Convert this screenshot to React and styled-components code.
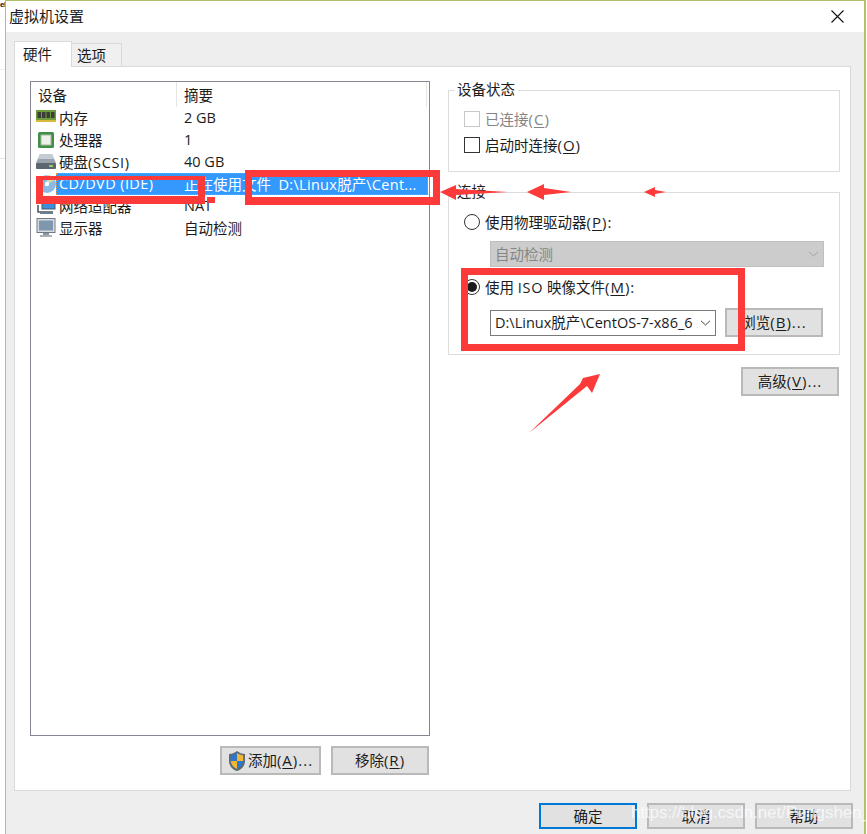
import React from "react";
import styled, { createGlobalStyle, css } from "styled-components";

const Global = createGlobalStyle`
  html, body { margin: 0; padding: 0; background: #fff; overflow: hidden; }
  * { box-sizing: border-box; }
  u { text-underline-offset: 2px; text-decoration-thickness: 1px; }
`;

const FONT = `"Open Sans", "Noto Sans CJK SC", sans-serif`;
const RED = "#fc3a3a";

const Page = styled.div`
  position: relative;
  display: flex;
  width: 867px;
  height: 834px;
  overflow: hidden;
  font-family: ${FONT};
  font-size: 14.5px;
  color: #1c1c1c;
  background: #fff;
`;
const Gutter = styled.div`
  width: 5px;
  flex: none;
  overflow: hidden;
  display: flex;
  flex-direction: column;
`;
const GutterText = styled.div`
  font: bold 8px/10px "Liberation Sans", sans-serif;
  letter-spacing: -0.5px;
  color: #111;
  width: 5px;
  height: 70px;
  white-space: nowrap;
  border-bottom: 1px solid #e8eef3;
`;
const GutterLine = styled.div`
  width: 5px;
  height: ${(p) => p.$h}px;
  border-bottom: 1px solid #e4e4e4;
`;
const Window = styled.div`
  width: 861px;
  flex: none;
  display: flex;
  flex-direction: column;
  border-left: 1px solid #b4c069;
  border-right: 2px solid #b4c069;
  border-top: 1px solid #b4c069;
  background: #eeeeee;
`;
const TitleBar = styled.div`
  height: 31px;
  flex: none;
  background: #fff;
  display: flex;
  align-items: center;
  justify-content: space-between;
  padding: 0 20px 2px 3px;
  font-size: 15px;
`;
const CloseIcon = styled.svg`
  width: 13px;
  height: 13px;
  display: block;
  margin-top: 2px;
`;
const Body = styled.div`
  flex: 1;
  padding: 9px 0 0 8px;
  display: flex;
  flex-direction: column;
`;
const TabStrip = styled.div`
  height: 25px;
  display: flex;
  align-items: flex-end;
  flex: none;
`;
const Tab = styled.div`
  border: 1px solid #d9d9d9;
  display: flex;
  align-items: center;
  font-size: 14.5px;
  ${(p) =>
    p.$active
      ? css`
          width: 58px;
          height: 26px;
          background: #fff;
          border-bottom: none;
          margin-bottom: -1px;
          position: relative;
          z-index: 1;
          padding: 0 0 3px 8px;
        `
      : css`
          width: 50px;
          height: 23px;
          background: #f0f0f0;
          border-left: none;
          border-bottom: none;
          padding: 0 0 1px 5px;
        `}
`;
const Panel = styled.div`
  width: 837px;
  height: 725px;
  flex: none;
  background: #fff;
  border: 1px solid #d9d9d9;
  padding: 14px 0 0 15px;
  display: flex;
  gap: 18px;
`;
const LeftColumn = styled.div`
  width: 400px;
  flex: none;
  display: flex;
  flex-direction: column;
`;
const DeviceList = styled.div`
  height: 655px;
  flex: none;
  border: 1px solid #828790;
  background: #fff;
`;
const ListHeader = styled.div`
  height: 25px;
  display: flex;
  align-items: center;
`;
const HeaderCell = styled.div`
  width: ${(p) => p.$w}px;
  height: 25px;
  flex: none;
  display: flex;
  align-items: center;
  padding: 0 0 1px ${(p) => p.$pl}px;
  border-right: 1px solid #e5e5e5;
`;
const Row = styled.div`
  height: 22px;
  display: flex;
  align-items: center;
  padding-left: 5px;
`;
const RowIcon = styled.svg`
  width: 20px;
  height: 20px;
  flex: none;
  display: block;
`;
const RowCells = styled.div`
  flex: 1;
  height: 22px;
  margin-right: 1px;
  padding: 0 0 1px 3px;
  display: flex;
  align-items: center;
  white-space: nowrap;
  ${(p) =>
    p.$selected &&
    css`
      background: #3399ff;
      color: #fff;
      outline: 1px dotted #e8913a;
      outline-offset: -1px;
    `}
`;
const NameCell = styled.div`
  width: 125px;
  flex: none;
`;
const SummaryCell = styled.div`
  flex: 1;
  overflow: hidden;
`;
const Latin = styled.span`
  letter-spacing: ${(p) => p.$ls || 0.4}px;
`;
const Accel = styled.span`
  font-size: 15px;
  letter-spacing: 1px;
`;
const ListActions = styled.div`
  display: flex;
  justify-content: flex-end;
  gap: 10px;
  margin-top: 10px;
  padding-right: 1px;
`;
const Button = styled.div`
  width: ${(p) => p.$w || 98}px;
  height: ${(p) => p.$h || 29}px;
  flex: none;
  display: flex;
  align-items: center;
  justify-content: center;
  gap: 2px;
  padding-bottom: 2px;
  background: #e1e1e1;
  border: ${(p) => (p.$primary ? "2px solid #0078d7" : "2px solid #b9b9b9")};
  white-space: nowrap;
`;
const ShieldIcon = styled.svg`
  width: 18px;
  height: 22px;
  flex: none;
  display: block;
  margin-top: 2px;
`;
const RightColumn = styled.div`
  width: 392px;
  flex: none;
  padding-top: 9px;
  display: flex;
  flex-direction: column;
`;
const Group = styled.div`
  position: relative;
  height: ${(p) => p.$h}px;
  flex: none;
  border: 1px solid #dcdcdc;
  margin-bottom: ${(p) => p.$mb}px;
  padding: ${(p) => p.$pt}px 0 0 15px;
`;
const Legend = styled.div`
  position: absolute;
  left: 5px;
  top: -11px;
  padding: 0 3px;
  height: 20px;
  line-height: 20px;
  background: #fff;
`;
const OptionRow = styled.div`
  height: 26px;
  display: flex;
  align-items: center;
  gap: 5px;
  margin-top: ${(p) => p.$mt || 0}px;
  color: ${(p) => (p.$disabled ? "#858585" : "inherit")};
`;
const OptionText = styled.span`
  margin-top: -1px;
`;
const Check = styled.div`
  width: 16px;
  height: 16px;
  flex: none;
  background: #fff;
  border: 1px solid ${(p) => (p.$disabled ? "#c8c8c8" : "#333")};
`;
const Radio = styled.div`
  width: 16px;
  height: 16px;
  flex: none;
  border-radius: 50%;
  background: #fff;
  border: 1px solid #333;
  display: flex;
  align-items: center;
  justify-content: center;
  &::after {
    content: "";
    width: 10px;
    height: 10px;
    border-radius: 50%;
    background: ${(p) => (p.$on ? "#1c1c1c" : "transparent")};
  }
`;
const Combo = styled.div`
  width: ${(p) => p.$w}px;
  height: 26px;
  flex: none;
  display: flex;
  align-items: center;
  justify-content: space-between;
  padding: 0 4px 2px 4px;
  white-space: nowrap;
  ${(p) =>
    p.$disabled
      ? css`
          margin: 6px 0 0 26px;
          background: #cccccc;
          border: 1px solid #bfbfbf;
          color: #868686;
        `
      : css`
          background: #fff;
          border: 1px solid #7a7a7a;
        `}
`;
const Chevron = styled.svg`
  width: 11px;
  height: 6px;
  flex: none;
  display: block;
  margin-top: 2px;
`;
const FileRow = styled.div`
  display: flex;
  align-items: center;
  gap: 9px;
  margin: 8px 0 0 26px;
`;
const RightActions = styled.div`
  display: flex;
  justify-content: flex-end;
  padding-right: 1px;
`;
const Footer = styled.div`
  display: flex;
  justify-content: flex-end;
  gap: 10px;
  padding: 12px 11px 0 0;
`;
const RedBox = styled.div`
  position: absolute;
  left: ${(p) => p.$x}px;
  top: ${(p) => p.$y}px;
  width: ${(p) => p.$w}px;
  height: ${(p) => p.$h}px;
  border-style: solid;
  border-color: ${RED};
  border-width: ${(p) => p.$b};
  pointer-events: none;
`;
const ArrowLayer = styled.svg`
  position: absolute;
  left: 0;
  top: 0;
  width: 867px;
  height: 834px;
  pointer-events: none;
`;
const Watermark = styled.div`
  position: absolute;
  left: 631px;
  top: 803px;
  font: 17px/20px "Liberation Sans", sans-serif;
  letter-spacing: -0.1px;
  color: rgba(255, 255, 255, 0.72);
  white-space: nowrap;
  pointer-events: none;
`;

const chev = (color) => (
  <Chevron viewBox="0 0 11 6">
    <path d="M1 .8 5.5 5 10 .8" fill="none" stroke={color} strokeWidth="1" />
  </Chevron>
);

const icons = {
  ram: (
    <>
      <rect x="0" y="2" width="20" height="11" fill="#6e9d3e" />
      <rect x="0" y="12" width="20" height="2" fill="#d9b93f" />
      <rect x="1.500" y="4" width="3.500" height="6" fill="#3b3f38" />
      <rect x="6" y="4" width="3.500" height="6" fill="#3b3f38" />
      <rect x="10.500" y="4" width="3.500" height="6" fill="#3b3f38" />
      <rect x="15" y="4" width="3.500" height="6" fill="#3b3f38" />
    </>
  ),
  cpu: (
    <>
      <rect x="2" y="2" width="16" height="16" rx="1.500" fill="#3f8f48" />
      <rect x="5" y="5" width="10" height="10" fill="#eef0ea" stroke="#a9b7a5" />
    </>
  ),
  disk: (
    <>
      <path d="M4 2h12l4 9H0z" fill="#9aa3ad" />
      <path d="M4 2h12l2 5H2z" fill="#c4cbd2" />
      <rect x="0" y="11" width="20" height="6" rx="1" fill="#5d6670" />
      <rect x="13" y="13" width="4" height="2" fill="#8fd06a" />
    </>
  ),
  cd: (
    <>
      <circle cx="11" cy="10" r="9" fill="#8cb9e6" />
      <path d="M11 1a9 9 0 0 1 8 5l-8 4z" fill="#cfe0b0" />
      <circle cx="11" cy="10" r="2.200" fill="#fff" />
    </>
  ),
  net: (
    <>
      <path d="M2 9v7h15" fill="none" stroke="#4a5a6a" strokeWidth="1.600" />
      <rect x="6" y="2" width="13" height="11" fill="#3c8fdc" stroke="#47596b" />
      <rect x="4" y="15" width="13" height="3" fill="#6c7d8e" />
    </>
  ),
  monitor: (
    <>
      <rect x="1" y="0.500" width="18" height="14" fill="#d8dde2" stroke="#6f7a85" />
      <rect x="3" y="2.500" width="14" height="10" fill="#7f97ad" />
      <rect x="7" y="15" width="6" height="2" fill="#8a949e" />
      <rect x="4" y="17" width="12" height="2" fill="#a8b0b8" />
    </>
  ),
};

const rows = [
  { icon: "ram", name: "内存", summary: "2 GB" },
  { icon: "cpu", name: "处理器", summary: "1" },
  { icon: "disk", name: <>硬盘<Latin $ls={0.7}>(SCSI)</Latin></>, summary: "40 GB" },
  {
    icon: "cd",
    name: <Latin>CD/DVD (IDE)</Latin>,
    summary: <>正在使用文件&nbsp;&nbsp;<Latin $ls={0.3}>D:\Linux</Latin>脱产<Latin $ls={0.3}>\Cent...</Latin></>,
    selected: true,
  },
  { icon: "net", name: "网络适配器", summary: "NAT" },
  { icon: "monitor", name: "显示器", summary: "自动检测" },
];

export default function App() {
  return (
    <Page>
      <Global />
      <Gutter>
        <GutterText>el</GutterText>
        <GutterLine $h={89} />
      </Gutter>
      <Window>
        <TitleBar>
          <span>虚拟机设置</span>
          <CloseIcon viewBox="0 0 13 13">
            <path d="M.5.5l12 12M12.500.5l-12 12" stroke="#111" strokeWidth="1.100" />
          </CloseIcon>
        </TitleBar>
        <Body>
          <TabStrip>
            <Tab $active>硬件</Tab>
            <Tab>选项</Tab>
          </TabStrip>
          <Panel>
            <LeftColumn>
              <DeviceList>
                <ListHeader>
                  <HeaderCell $w={146} $pl={7}>设备</HeaderCell>
                  <HeaderCell $w={250} $pl={7}>摘要</HeaderCell>
                </ListHeader>
                {rows.map((r) => (
                  <Row key={r.icon}>
                    <RowIcon viewBox="0 0 20 20">{icons[r.icon]}</RowIcon>
                    <RowCells $selected={r.selected}>
                      <NameCell>{r.name}</NameCell>
                      <SummaryCell>{r.summary}</SummaryCell>
                    </RowCells>
                  </Row>
                ))}
              </DeviceList>
              <ListActions>
                <Button $w={101}>
                  <ShieldIcon viewBox="0 0 18 22">
                    <path d="M9 1c2.500 2 5 2.700 8 3v7c0 5-3.500 8.500-8 10-4.500-1.500-8-5-8-10V4c3-.3 5.500-1 8-3z" fill="#5a6a7a" />
                    <path d="M9 3C7 4.400 5 5.100 2.800 5.400V11H9z" fill="#2f78c8" />
                    <path d="M9 3c2 1.400 4 2.100 6.200 2.400V11H9z" fill="#f2b632" />
                    <path d="M2.800 11H9v8c-3.400-1.300-6-4.300-6.200-8z" fill="#f2b632" />
                    <path d="M15.200 11H9v8c3.400-1.300 6-4.300 6.200-8z" fill="#2f78c8" />
                  </ShieldIcon>
                  <span>添加<Accel>(<u>A</u>)...</Accel></span>
                </Button>
                <Button>
                  <span>移除<Accel>(<u>R</u>)</Accel></span>
                </Button>
              </ListActions>
            </LeftColumn>
            <RightColumn>
              <Group $h={82} $mb={20} $pt={15}>
                <Legend>设备状态</Legend>
                <OptionRow $disabled>
                  <Check $disabled />
                  <OptionText>已连接<Accel>(<u>C</u>)</Accel></OptionText>
                </OptionRow>
                <OptionRow>
                  <Check />
                  <OptionText>启动时连接<Accel>(<u>O</u>)</Accel></OptionText>
                </OptionRow>
              </Group>
              <Group $h={163} $mb={12} $pt={16}>
                <Legend>连接</Legend>
                <OptionRow>
                  <Radio />
                  <OptionText>使用物理驱动器<Accel>(<u>P</u>):</Accel></OptionText>
                </OptionRow>
                <Combo $disabled $w={334}>
                  <span>自动检测</span>
                  {chev("#a0a0a0")}
                </Combo>
                <OptionRow $mt={7}>
                  <Radio $on />
                  <OptionText>使用 <Latin $ls={0.7}>ISO</Latin> 映像文件<Accel>(<u>M</u>):</Accel></OptionText>
                </OptionRow>
                <FileRow>
                  <Combo $w={226}>
                    <span>D:\Linux脱产\CentOS-7-x86_6</span>
                    {chev("#444")}
                  </Combo>
                  <Button>
                    <span>浏览<Accel>(<u>B</u>)...</Accel></span>
                  </Button>
                </FileRow>
              </Group>
              <RightActions>
                <Button>
                  <span>高级<Accel>(<u>V</u>)...</Accel></span>
                </Button>
              </RightActions>
            </RightColumn>
          </Panel>
          <Footer>
            <Button $primary $h={26}>确定</Button>
            <Button $h={26}>取消</Button>
            <Button $h={26}>帮助</Button>
          </Footer>
        </Body>
      </Window>
      <RedBox $x={36} $y={176} $w={169} $h={28} $b="4px 7px 8px 7px" />
      <RedBox $x={207} $y={197} $w={8} $h={6} $b="3px 4px" />
      <RedBox $x={245} $y={170} $w={195} $h={35} $b="7px 7px 8px 7px" />
      <RedBox $x={461} $y={268} $w={284} $h={83} $b="7px" />
      <ArrowLayer viewBox="0 0 867 834">
        <g fill={RED}>
          <polygon points="440,192 456,185 456,189 508,192 456,195 456,200" />
          <polygon points="527,192 544,184 544,188 571,192 544,195 544,200" />
          <polygon points="644,192 655,187 655,190 666,192 655,194 655,197" />
          <polygon points="600,374 592,393 587,386 529,433 580,384 583,378" />
        </g>
      </ArrowLayer>
      <Watermark>https://blog.csdn.net/Pengshen_</Watermark>
    </Page>
  );
}
